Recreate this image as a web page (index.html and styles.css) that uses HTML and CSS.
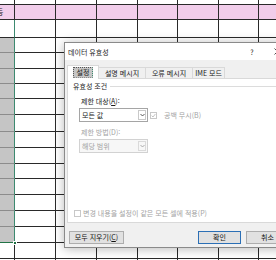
FILE: index.html
```html
<!DOCTYPE html>
<html lang="ko">
<head>
<meta charset="utf-8">
<title>데이터 유효성</title>
<link rel="stylesheet" href="styles.css">
</head>
<body>
<div class="sheet">
  <div class="row h5"><span></span><span></span><span></span><span></span><span></span><span></span><span></span><span></span></div>
  <div class="row hdr h15"><span><b class="cut">등</b></span><span></span><span></span><span></span><span></span><span></span><span></span><span></span></div>
  <div class="row h18"><span></span><span></span><span></span><span></span><span></span><span></span><span></span><span></span></div>
  <div class="row sel h15"><span></span><span></span><span></span><span></span><span></span><span></span><span></span><span></span></div>
  <div class="row sel h16"><span></span><span></span><span></span><span></span><span></span><span></span><span></span><span></span></div>
  <div class="row sel h15"><span></span><span></span><span></span><span></span><span></span><span></span><span></span><span></span></div>
  <div class="row sel h15"><span></span><span></span><span></span><span></span><span></span><span></span><span></span><span></span></div>
  <div class="row sel h16"><span></span><span></span><span></span><span></span><span></span><span></span><span></span><span></span></div>
  <div class="row sel h17"><span></span><span></span><span></span><span></span><span></span><span></span><span></span><span></span></div>
  <div class="row sel h16"><span></span><span></span><span></span><span></span><span></span><span></span><span></span><span></span></div>
  <div class="row sel h16"><span></span><span></span><span></span><span></span><span></span><span></span><span></span><span></span></div>
  <div class="row sel h15"><span></span><span></span><span></span><span></span><span></span><span></span><span></span><span></span></div>
  <div class="row sel h16"><span></span><span></span><span></span><span></span><span></span><span></span><span></span><span></span></div>
  <div class="row sel h16"><span></span><span></span><span></span><span></span><span></span><span></span><span></span><span></span></div>
  <div class="row sel h16"><span></span><span></span><span></span><span></span><span></span><span></span><span></span><span></span></div>
  <div class="row sel last h16"><span><i class="handle"></i></span><span></span><span></span><span></span><span></span><span></span><span></span><span></span></div>
  <div class="row h16"><span></span><span></span><span></span><span></span><span></span><span></span><span></span><span></span></div>
  <div class="row h16"><span></span><span></span><span></span><span></span><span></span><span></span><span></span><span></span></div>
</div>

<div class="dlg">
  <div class="titlebar">
    <span class="ttl">데이터 유효성</span>
    <span class="help">?</span>
    <span class="close"><svg width="7" height="7" viewBox="0 0 7 7"><path d="M0.5 0.5L6.5 6.5M6.5 0.5L0.5 6.5" stroke="#222" stroke-width="0.8" fill="none"/></svg></span>
  </div>
  <div class="client">
    <div class="tabs">
      <div class="tab sel"><span class="focus">설정</span></div>
      <div class="tab t2">설명 메시지</div>
      <div class="tab t3">오류 메시지</div>
      <div class="tab t4">IME 모드</div>
    </div>
    <div class="panel">
      <div class="legend"><span>유효성 조건</span><span class="gline"></span></div>
      <div class="group">
        <div class="lbl">제한 대상(<u>A</u>):</div>
        <div class="crow">
          <div class="combo"><span class="val">모든 값</span><span class="drop"><svg width="5" height="4" viewBox="0 0 5 4"><path d="M0.5 1L2.5 3L4.5 1" stroke="#333" stroke-width="0.8" fill="none"/></svg></span></div>
          <span class="chk on dis"><svg width="5" height="5" viewBox="0 0 5 5"><path d="M0.6 2.6L2 4L4.4 1" stroke="#b4b4b4" stroke-width="0.8" fill="none"/></svg></span>
          <span class="clbl dis">공백 무시(B)</span>
        </div>
        <div class="lbl dis">제한 방법(D):</div>
        <div class="crow">
          <div class="combo off"><span class="val">해당 범위</span><span class="drop"><svg width="5" height="4" viewBox="0 0 5 4"><path d="M0.5 1L2.5 3L4.5 1" stroke="#9a9a9a" stroke-width="0.8" fill="none"/></svg></span></div>
        </div>
      </div>
      <div class="brow">
        <span class="chk dis"></span>
        <span class="clbl dis">변경 내용을 설정이 같은 모든 셀에 적용(P)</span>
      </div>
    </div>
    <div class="btns">
      <button class="btn wide">모두 지우기(<u>C</u>)</button>
      <span class="spacer"></span>
      <button class="btn def">확인</button>
      <button class="btn">취소</button>
    </div>
  </div>
</div>
</body>
</html>
```

FILE: styles.css
```css
* { box-sizing: border-box; }
html, body { margin: 0; padding: 0; }
body {
  width: 276px;
  height: 260px;
  overflow: hidden;
  position: relative;
  background: #fff;
  font-family: "Noto Sans CJK KR", "Noto Sans", sans-serif;
  color: #1b1b1b;
}

/* spreadsheet */
.sheet { display: flex; flex-direction: column; }
.row { display: flex; flex: none; }
.row > span {
  flex: none;
  position: relative;
  overflow: hidden;
  background: #fff;
  border-right: 1px solid #2a2a2a;
  border-bottom: 1px solid #2a2a2a;
}
.row > span:nth-child(1) { width: 15px; }
.row > span:nth-child(2) { width: 41px; }
.row > span:nth-child(3) { width: 41px; }
.row > span:nth-child(4) { width: 41px; }
.row > span:nth-child(5) { width: 40px; }
.row > span:nth-child(6) { width: 41px; }
.row > span:nth-child(7) { width: 40px; }
.row > span:nth-child(8) { width: 41px; }
.h5 { height: 5px; }
.h15 { height: 15px; }
.h16 { height: 16px; }
.h17 { height: 17px; }
.h18 { height: 18px; }
.hdr > span { background: #f1cdea; }
.cut {
  display: block;
  margin-left: -4px;
  font-weight: normal;
  font-size: 8px;
  line-height: 14px;
  color: #222;
}
.sel > span:first-child {
  background: #c5c5c5;
  border-bottom-color: #8c8c8c;
  border-right-color: #3d8a70;
}
.h18 > span:first-child { border-right-color: #3d8a70; }
.sel.last > span:first-child { border-bottom-color: #217346; overflow: visible; }
.handle {
  position: absolute;
  right: -3px;
  bottom: -3px;
  width: 4px;
  height: 4px;
  background: #217346;
  border: 1px solid #fff;
  z-index: 1;
}

/* dialog */
.dlg {
  position: absolute;
  left: 64px;
  top: 42px;
  width: 230px;
  height: 206px;
  border: 1px solid #8a8a8a;
  background: #f0f0f0;
  box-shadow: 0 1px 10px rgba(0, 0, 0, 0.28);
  display: flex;
  flex-direction: column;
  z-index: 2;
}
.titlebar {
  height: 17px;
  flex: none;
  background: #fff;
  display: flex;
  align-items: center;
  padding-left: 3px;
  font-size: 7px;
  color: #1a1a1a;
}
.ttl { flex: 1; }
.help { width: 8px; margin-right: 5px; text-align: center; font-size: 7px; }
.close { width: 32px; display: flex; justify-content: center; }

.client {
  flex: 1;
  display: flex;
  flex-direction: column;
  padding: 5px 4px 0 2px;
}
.tabs {
  display: flex;
  align-items: flex-end;
  height: 13px;
  flex: none;
  font-size: 7px;
  color: #222;
}
.tab {
  height: 11px;
  line-height: 10px;
  text-align: center;
  border: 1px solid #d9d9d9;
  border-bottom: none;
  background: #f0f0f0;
  margin-left: -1px;
}
.tab.sel {
  width: 32px;
  height: 14px;
  margin-left: 0;
  margin-bottom: -1px;
  background: #fff;
  position: relative;
  z-index: 1;
  display: flex;
  align-items: center;
  justify-content: center;
  padding-bottom: 1px;
}
.focus {
  border: 1px dotted #555;
  padding: 0 3px;
  line-height: 9px;
}
.t2 { width: 48px; }
.t3 { width: 48px; }
.t4 { width: 33px; }

.panel {
  height: 145px;
  flex: none;
  background: #fff;
  border: 1px solid #d9d9d9;
  display: flex;
  flex-direction: column;
  font-size: 7px;
}
.legend {
  display: flex;
  align-items: center;
  height: 12px;
  margin-top: 1px;
  padding-left: 5px;
  color: #1e1e1e;
}
.gline {
  flex: 1;
  border-top: 1px solid #dcdcdc;
  margin: 1px 4px 0 3px;
}
.group { padding-left: 11px; display: flex; flex-direction: column; }
.lbl {
  height: 12px;
  line-height: 12px;
  margin-top: 3px;
  padding-left: 2px;
}
.lbl.dis { margin-top: 4px; }
u { text-decoration: underline; text-underline-offset: 1px; }
.dis { color: #a3a3a3; }
.crow {
  display: flex;
  align-items: center;
  height: 14px;
  margin-top: 1px;
}
.combo {
  width: 69px;
  height: 14px;
  border: 1px solid #a5a5a5;
  background: #fff;
  display: flex;
  align-items: center;
}
.combo .val { flex: 1; padding-left: 2px; line-height: 12px; }
.drop {
  width: 8px;
  height: 10px;
  margin-right: 1px;
  border: 1px solid #c9c9c9;
  display: flex;
  align-items: center;
  justify-content: center;
}
.combo.off { border-color: #d2d2d2; color: #a3a3a3; background: #f7f7f7; }
.combo.off .drop { border-color: #dadada; }
.chk {
  width: 7px;
  height: 7px;
  flex: none;
  border: 1px solid #c8c8c8;
  background: #fff;
  display: flex;
  align-items: center;
  justify-content: center;
}
.crow .chk { margin-left: 2px; }
.crow .clbl { margin-left: 7px; }
.brow {
  margin-top: auto;
  margin-bottom: 3px;
  height: 12px;
  display: flex;
  align-items: center;
  padding-left: 6px;
}
.brow .clbl { margin-left: 2px; }

.btns {
  display: flex;
  margin-top: 8px;
  padding-left: 2px;
}
.spacer { flex: 1; }
.btn {
  width: 43px;
  height: 13px;
  padding: 0;
  margin: 0 0 0 5px;
  border: 1px solid #adadad;
  background: #e1e1e1;
  font-family: "Noto Sans CJK KR", "Noto Sans", sans-serif;
  font-size: 7px;
  line-height: 11px;
  color: #111;
}
.btn.wide { width: 55px; margin-left: 0; }
.btn.def { border-color: #2b6fb5; }
```
